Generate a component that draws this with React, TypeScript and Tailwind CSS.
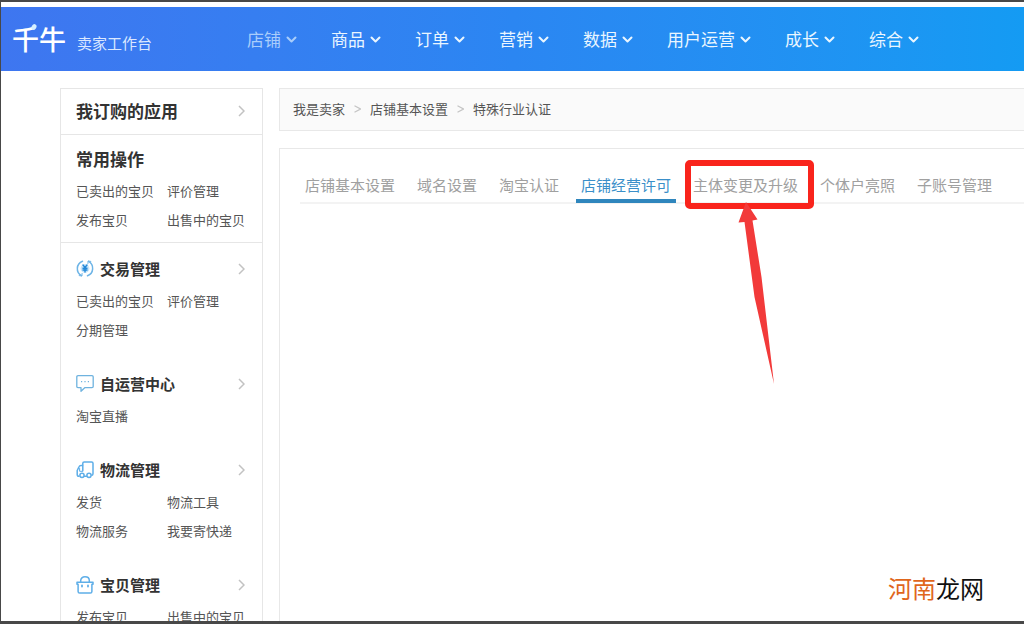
import React from "react";

type Section = {
  title: string;
  icon: React.ReactNode;
  links: string[];
};

const iconClass = "h-[18px] w-[18px] shrink-0";

const TradeIcon = () => (
  <svg viewBox="0 0 18 18" className={iconClass} fill="none" stroke="#6db4e6" strokeWidth="1.5" strokeLinecap="round" aria-hidden="true">
    <path d="M6.500 1.200A8 8 0 0 0 5.500 15.700M11.500 15.800A8 8 0 0 0 12.500 1.300" />
    <path d="M3.200 15.600L5.900 16L6.100 13.500M14.800 1.400L12.100 1L11.900 3.500" strokeWidth="1" />
    <circle cx="9" cy="8.500" r="4.400" fill="#c6e5fa" stroke="none" />
    <path d="M7 5L9 7.500L11 5M9 7.500V12M7 8.200H11M7 10H11" stroke="#2388d8" strokeWidth="1.400" />
  </svg>
);

const ChatIcon = () => (
  <svg viewBox="0 0 18 18" className={iconClass} fill="none" stroke="#6fb3df" strokeWidth="1.3" strokeLinejoin="round" aria-hidden="true">
    <path d="M2 .700H16Q17.200 .700 17.200 1.800V11.500Q17.200 12.600 16 12.600H9L5 16.300V12.600H2Q.800 12.600 .800 11.500V1.800Q.800 .700 2 .700Z" />
    <path d="M5 6.600H6.200M8.400 6.600H9.600M11.800 6.600H13" strokeWidth="1.400" />
  </svg>
);

const TruckIcon = () => (
  <svg viewBox="0 0 18 18" className={iconClass} fill="none" stroke="#5eaee8" strokeWidth="1.500" strokeLinejoin="round" strokeLinecap="round" aria-hidden="true">
    <path d="M6.800 9.500V2.300Q6.800 1 8.200 1H15.600Q17 1 17 2.300V12.500Q17 14 16 14.300" />
    <path d="M6.500 4.500H5Q3.500 4.500 3 5.800L1.200 9.500V13.500Q1.200 15.300 3 15.300M8.200 15.300H10.500" />
    <path d="M3.600 7.500V10.300H6.800" strokeWidth="1" />
    <circle cx="6" cy="14.300" r="2.100" />
    <circle cx="13" cy="14.300" r="2.100" />
  </svg>
);

const BagIcon = () => (
  <svg viewBox="0 0 18 18" className={iconClass} fill="none" stroke="#5eaee8" strokeWidth="1.500" strokeLinecap="round" strokeLinejoin="round" aria-hidden="true">
    <path d="M1 6.200H17V8.200H15.900V15.500Q15.900 17.100 14.300 17.100H3.700Q2.100 17.100 2.100 15.500V8.200H1Z" />
    <path d="M4.700 6V4.500C4.700 2.400 6.500 .800 9 .800S13.300 2.400 13.300 4.500V6" />
    <path d="M6 9.500V10.500M12 9.500V10.500" strokeWidth="1.800" />
  </svg>
);

const ChevronDown = () => (
  <svg viewBox="0 0 11 8" className="mt-[2px] h-2 w-[11px] shrink-0" fill="none" stroke="currentColor" strokeWidth="2" strokeLinecap="round" strokeLinejoin="round" aria-hidden="true">
    <path d="M1.500 1.500L5.500 5.500L9.500 1.500" />
  </svg>
);

const ChevronRight = () => (
  <svg viewBox="0 0 7 12" className="h-3 w-[7px] shrink-0" fill="none" stroke="#c2c2c2" strokeWidth="1.5" aria-hidden="true">
    <path d="M1 1L6 6L1 11" />
  </svg>
);

const CrumbArrow = () => (
  <svg viewBox="0 0 7 8" className="mx-[9px] h-2 w-[7px] shrink-0" fill="none" stroke="#c4c4c4" strokeWidth="1.200" aria-hidden="true">
    <path d="M.500 .800L6.500 4L.500 7.200" />
  </svg>
);

const navItems = ["店铺", "商品", "订单", "营销", "数据", "用户运营", "成长", "综合"];

const crumbs = ["我是卖家", "店铺基本设置", "特殊行业认证"];

const tabs = ["店铺基本设置", "域名设置", "淘宝认证", "店铺经营许可", "主体变更及升级", "个体户亮照", "子账号管理"];
const activeTab = "店铺经营许可";
const markedTab = "主体变更及升级";

const sections: Section[] = [
  { title: "交易管理", icon: <TradeIcon />, links: ["已卖出的宝贝", "评价管理", "分期管理"] },
  { title: "自运营中心", icon: <ChatIcon />, links: ["淘宝直播"] },
  { title: "物流管理", icon: <TruckIcon />, links: ["发货", "物流工具", "物流服务", "我要寄快递"] },
  { title: "宝贝管理", icon: <BagIcon />, links: ["发布宝贝", "出售中的宝贝"] },
];

const LinkGrid = ({ links }: { links: string[] }) => (
  <ul className="grid grid-cols-[91px_1fr] text-[13px] leading-[29px] text-[#555]">
    {links.map((link) => (
      <li key={link}>
        <a href="#" className="whitespace-nowrap">{link}</a>
      </li>
    ))}
  </ul>
);

const Marker = () => (
  <span className="pointer-events-none absolute -left-[3px] -top-[13px] block h-[49px] w-[129px] rounded-[5px] border-[6px] border-[#f9241c]">
    <svg viewBox="0 0 40 184" className="absolute left-[44px] top-[36px] h-[184px] w-[40px]" fill="#f23a3a" aria-hidden="true">
      <path d="M11 0L22.500 17.500L17.500 18.500L26.500 75L39 182L19.500 95L9.500 20L3.500 20.500Z" />
    </svg>
  </span>
);

export default function App() {
  return (
    <div className="flex h-screen flex-col overflow-hidden border-b-[3px] border-l border-t-2 border-[#484848] bg-white font-['Noto_Sans_CJK_SC','Noto_Sans',sans-serif]">
      <header className="mt-[5px] flex h-16 shrink-0 items-center bg-linear-to-r from-[#3e76f0] via-[#2b86f2] to-[#149bf3] pl-[11px] text-white">
        <a href="#" className="flex w-[235px] shrink-0 items-center gap-[11px]">
          <span className="relative text-[27px] font-medium leading-[32px]">
            千牛
            <svg viewBox="0 0 6 6" className="absolute left-[19px] top-[1px] h-[6px] w-[6px]" fill="#d5efff" aria-hidden="true">
              <ellipse cx="3" cy="3" rx="2.300" ry="3" transform="rotate(30 3 3)" />
            </svg>
          </span>
          <span className="pt-2 text-[15px] leading-[20px] text-[#dbe8ff]">卖家工作台</span>
        </a>
        <nav className="flex items-center gap-[34px] text-[17px] leading-6">
          {navItems.map((item, i) => (
            <button key={item} type="button" className={i === 0 ? "flex items-center gap-[5px] whitespace-nowrap text-[#a9cdfb]" : "flex items-center gap-[5px] whitespace-nowrap text-[#eaf6ff]"}>
              {item}
              <ChevronDown />
            </button>
          ))}
        </nav>
      </header>

      <div className="flex min-h-0 flex-1 gap-4 pl-[59px] pt-[17px]">
        <aside className="w-[203px] shrink-0 overflow-hidden border border-b-0 border-[#e6e6e6]">
          <a href="#" className="flex h-[46px] items-center justify-between border-b border-[#e6e6e6] pb-px pl-[15px] pr-[17px]">
            <span className="text-[17px] font-bold text-[#333]">我订购的应用</span>
            <ChevronRight />
          </a>
          <section className="border-b border-[#e6e6e6] pb-2 pl-[15px] pt-3">
            <h2 className="mb-[5px] text-[17px] font-bold leading-6 text-[#333]">常用操作</h2>
            <LinkGrid links={["已卖出的宝贝", "评价管理", "发布宝贝", "出售中的宝贝"]} />
          </section>
          <div className="flex flex-col gap-7 pt-[14px]">
            {sections.map((s) => (
              <section key={s.title} className="pl-[15px]">
                <h2 className="mb-[5px] flex h-6 items-center gap-[6px] pr-[17px] text-[15px] font-bold leading-6 text-[#333]">
                  {s.icon}
                  <span className="flex-1">{s.title}</span>
                  <ChevronRight />
                </h2>
                <LinkGrid links={s.links} />
              </section>
            ))}
          </div>
        </aside>

        <main className="flex min-w-0 flex-1 flex-col gap-[17px]">
          <nav className="flex h-[43px] shrink-0 items-center border border-r-0 border-[#e8e8e8] bg-[#fafafa] pb-[2px] pl-[13px] text-[13px] text-[#555]">
            {crumbs.map((crumb, i) => (
              <React.Fragment key={crumb}>
                {i > 0 && <CrumbArrow />}
                <a href="#">{crumb}</a>
              </React.Fragment>
            ))}
          </nav>
          <div className="relative flex-1 border-l border-t border-[#e8e8e8] pl-5 pt-6">
            <div role="tablist" className="flex h-[31px] gap-3 border-b-2 border-[#f3f3f3] text-[15px] leading-6">
              {tabs.map((tab) => (
                <button
                  key={tab}
                  type="button"
                  role="tab"
                  aria-selected={tab === activeTab}
                  className={
                    tab === activeTab
                      ? "relative h-[30px] shrink-0 border-b-4 border-[#2f86bd] px-[5px] pb-[3px] text-[#3a8fc9]"
                      : "relative h-[26px] shrink-0 px-[5px] pb-[3px] text-[#a0a0a0]"
                  }
                >
                  {tab}
                  {tab === markedTab && <Marker />}
                </button>
              ))}
            </div>
            <p className="absolute bottom-4 right-10 text-[24px] leading-[34px] text-[#111]">
              <span className="text-[#e0661c]">河南</span>龙网
            </p>
          </div>
        </main>
      </div>
    </div>
  );
}
